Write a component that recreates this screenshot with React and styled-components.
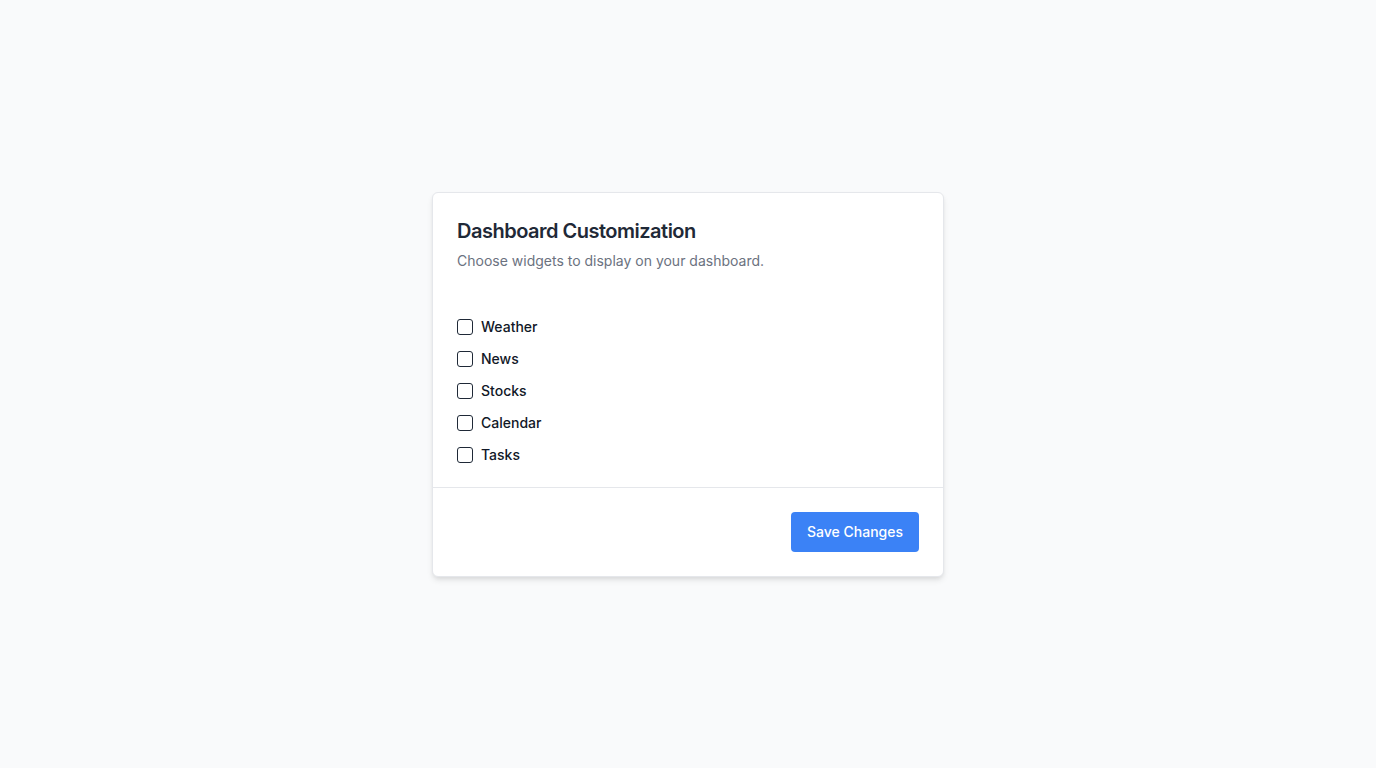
import React, { useState } from "react";
import styled, { createGlobalStyle } from "styled-components";

const Global = createGlobalStyle`
  * { box-sizing: border-box; }
  html, body { margin: 0; padding: 0; }
  body {
    background: #f9fafb;
    font-family: Inter, "Noto Sans", sans-serif;
    color: #111827;
  }
`;

const Page = styled.div`
  min-height: 100vh;
  display: flex;
  align-items: center;
  justify-content: center;
`;

const Card = styled.div`
  width: 512px;
  background: #ffffff;
  border: 1px solid #e5e7eb;
  border-radius: 6px;
  box-shadow: 0 4px 6px -1px rgba(0, 0, 0, 0.1), 0 2px 4px -1px rgba(0, 0, 0, 0.06);
`;

const Header = styled.div`
  padding: 24px 24px 0;
`;

const Title = styled.h2`
  margin: 0;
  font-size: 20px;
  line-height: 28px;
  font-weight: 600;
  letter-spacing: -0.025em;
  color: #1f2937;
`;

const Subtitle = styled.p`
  margin: 6px 0 0;
  font-size: 14px;
  line-height: 20px;
  color: #6b7280;
`;

const Content = styled.div`
  padding: 44px 24px 20px;
  display: flex;
  flex-direction: column;
  gap: 8px;
`;

const Row = styled.label`
  display: flex;
  align-items: center;
  gap: 8px;
  height: 24px;
  font-size: 14px;
  font-weight: 500;
  color: #111827;
  cursor: pointer;
`;

const Box = styled.input`
  appearance: none;
  margin: 0;
  width: 16px;
  height: 16px;
  border: 1px solid #1f2937;
  border-radius: 3px;
  background: #fff;
  cursor: pointer;
  position: relative;
  &:checked {
    background: #3b82f6;
    border-color: #3b82f6;
  }
  &:checked::after {
    content: "";
    position: absolute;
    left: 4px;
    top: 1px;
    width: 5px;
    height: 9px;
    border: solid #fff;
    border-width: 0 2px 2px 0;
    transform: rotate(45deg);
  }
`;

const Footer = styled.div`
  border-top: 1px solid #e5e7eb;
  padding: 24px;
  display: flex;
  justify-content: flex-end;
`;

const Button = styled.button`
  height: 40px;
  width: 128px;
  border: none;
  border-radius: 4px;
  background: #3b82f6;
  color: #ffffff;
  font-family: Inter, "Noto Sans", sans-serif;
  font-size: 14px;
  font-weight: 500;
  cursor: pointer;
  &:hover { background: #2563eb; }
`;

const widgets = ["Weather", "News", "Stocks", "Calendar", "Tasks"];

export default function App() {
  const [checked, setChecked] = useState({});
  return (
    <Page>
      <Global />
      <Card>
        <Header>
          <Title>Dashboard Customization</Title>
          <Subtitle>Choose widgets to display on your dashboard.</Subtitle>
        </Header>
        <Content>
          {widgets.map((w) => (
            <Row key={w}>
              <Box
                type="checkbox"
                checked={!!checked[w]}
                onChange={() => setChecked((c) => ({ ...c, [w]: !c[w] }))}
              />
              {w}
            </Row>
          ))}
        </Content>
        <Footer>
          <Button>Save Changes</Button>
        </Footer>
      </Card>
    </Page>
  );
}
